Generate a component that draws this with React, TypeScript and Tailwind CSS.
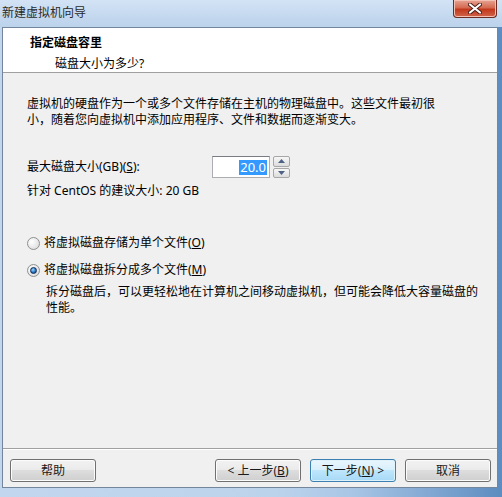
import { useState } from 'react'

const font = "font-['Noto_Sans','Noto_Sans_CJK_SC',sans-serif]"

function WizardButton({
  children,
  primary = false,
  className = '',
}: {
  children: React.ReactNode
  primary?: boolean
  className?: string
}) {
  return (
    <button
      className={
        'flex h-[23px] w-[86px] items-center justify-center rounded-[3px] border text-[12px] leading-none text-[#1a1a1a] ' +
        (primary
          ? 'border-[#3c7fb1] bg-[linear-gradient(#eaf6fd_0%,#d9f0fc_45%,#bee6fd_50%,#a7d9f5_100%)] shadow-[inset_0_0_0_1px_#dff2fc]'
          : 'border-[#707070] bg-[linear-gradient(#f2f2f2_0%,#ebebeb_45%,#dddddd_50%,#cfcfcf_100%)] shadow-[inset_0_0_0_1px_#fcfcfc]') +
        ' ' +
        className
      }
    >
      {children}
    </button>
  )
}

function Radio({ checked }: { checked: boolean }) {
  return (
    <span className="flex size-[13px] shrink-0 items-center justify-center rounded-full border border-[#8e8f8f] bg-[radial-gradient(circle_at_35%_35%,#ffffff,#d6d6d6)]">
      {checked && (
        <span className="size-[7px] rounded-full border border-[#0d2a52] bg-[radial-gradient(circle_at_40%_35%,#9fd8ff,#1d6fc4_60%,#0b3f7e)]" />
      )}
    </span>
  )
}

function Spinner() {
  return (
    <div className="ml-[3px] flex h-[22px] w-[17px] flex-col gap-[1px]">
      {[0, 1].map((i) => (
        <div
          key={i}
          className="flex flex-1 items-center justify-center rounded-[2px] border border-[#a7a7a7] bg-[linear-gradient(#f7f7f7,#dcdcdc)]"
        >
          <svg width="7" height="4" viewBox="0 0 7 4">
            {i === 0 ? (
              <path d="M0 4 L3.5 0 L7 4 Z" fill="#4d6185" />
            ) : (
              <path d="M0 0 L3.5 4 L7 0 Z" fill="#4d6185" />
            )}
          </svg>
        </div>
      ))}
    </div>
  )
}

export default function App() {
  const [split, setSplit] = useState(true)

  return (
    <div
      className={`${font} flex h-[497px] w-[502px] flex-col overflow-hidden bg-[linear-gradient(90deg,#c2d7ee_0%,#bcd3ec_55%,#a9c6e6_70%,#5d8cc0_100%)] text-[12px] text-black`}
    >
      {/* title bar */}
      <div className="relative flex h-[27px] shrink-0 items-center bg-[linear-gradient(180deg,#d3e3f5_0%,#c4d8ef_60%,#bcd3ec_100%)] pl-[2px]">
        <span className="pb-[2px] text-[12px] text-[#2a2a2a]">新建虚拟机向导</span>
        <div className="absolute top-0 right-[5px] flex h-[18px] w-[44px] items-center justify-center rounded-b-[4px] border border-t-0 border-[#6b2a22] bg-[linear-gradient(#e8a493_0%,#d46a52_45%,#c2381c_55%,#d2654a_100%)] shadow-[inset_0_0_0_1px_#f2c1b4]">
          <svg width="14" height="11" viewBox="0 0 14 11">
            <path
              d="M2 1.5 L12 9.5 M12 1.5 L2 9.5"
              stroke="#4a1f18"
              strokeWidth="4"
              strokeLinecap="round"
            />
            <path
              d="M2 1.5 L12 9.5 M12 1.5 L2 9.5"
              stroke="#ffffff"
              strokeWidth="2.2"
              strokeLinecap="round"
            />
          </svg>
        </div>
      </div>

      <div className="flex flex-1 px-[2px] pr-[4px]">
        <div className="flex flex-1 flex-col border border-[#74869b] bg-[#f0f0f0]">
          {/* header */}
          <div className="flex h-[45px] shrink-0 flex-col border-b border-[#a0a0a0] bg-white pt-[7px] pl-[27px]">
            <span className="text-[12px] leading-[16px] font-bold">指定磁盘容里</span>
            <span className="mt-[5px] pl-[25px] leading-[16px]">磁盘大小为多少?</span>
          </div>

          {/* body */}
          <div className="flex flex-1 flex-col pt-[23px] pl-[24px]">
            <p className="leading-[16px]">
              虚拟机的硬盘作为一个或多个文件存储在主机的物理磁盘中。这些文件最初很
              <br />
              小，随着您向虚拟机中添加应用程序、文件和数据而逐渐变大。
            </p>

            <div className="mt-[28px] flex items-center">
              <span className="w-[185px]">
                最大磁盘大小(GB)(<u>S</u>):
              </span>
              <div className="flex h-[22px] w-[58px] items-center justify-end border border-[#abadb3] border-t-[#7a7c84] bg-white pr-[2px]">
                <span className="bg-[#3399ff] px-[1px] text-[13px] leading-[15px] text-white">20.0</span>
              </div>
              <Spinner />
            </div>

            <span className="mt-[5px] leading-[16px]">针对 CentOS 的建议大小: 20 GB</span>

            <label
              className="mt-[36px] flex cursor-default items-center gap-[4px] leading-[16px]"
              onClick={() => setSplit(false)}
            >
              <Radio checked={!split} />
              <span>
                将虚拟磁盘存储为单个文件(<u>O</u>)
              </span>
            </label>

            <label
              className="mt-[11px] flex cursor-default items-center gap-[4px] leading-[16px]"
              onClick={() => setSplit(true)}
            >
              <Radio checked={split} />
              <span>
                将虚拟磁盘拆分成多个文件(<u>M</u>)
              </span>
            </label>

            <p className="mt-[6px] pl-[19px] leading-[16px]">
              拆分磁盘后，可以更轻松地在计算机之间移动虚拟机，但可能会降低大容量磁盘的
              <br />
              性能。
            </p>
          </div>

          {/* footer */}
          <div className="h-0 border-t border-b border-t-[#a0a0a0] border-b-white" />
          <div className="flex h-[37px] shrink-0 items-start pt-[9px] pr-[6px] pl-[7px]">
            <WizardButton>帮助</WizardButton>
            <div className="flex-1" />
            <WizardButton>
              &lt; 上一步(<u>B</u>)
            </WizardButton>
            <WizardButton primary className="ml-[9px]">
              下一步(<u>N</u>) &gt;
            </WizardButton>
            <WizardButton className="ml-[9px]">取消</WizardButton>
          </div>
        </div>
      </div>
      <div className="h-[9px] shrink-0" />
    </div>
  )
}
